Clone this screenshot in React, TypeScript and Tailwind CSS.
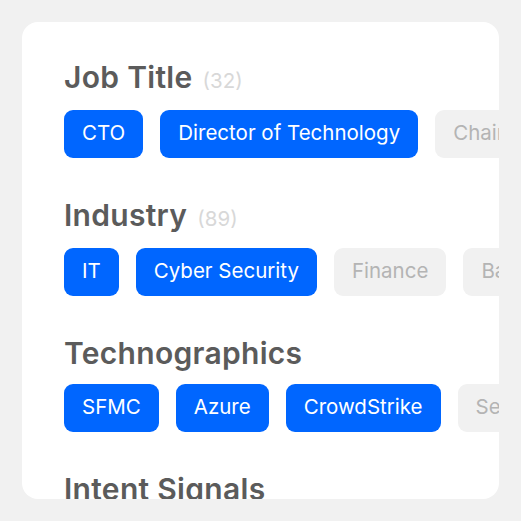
import React from 'react';

type Chip = { label: string; active: boolean };

const sections: { title: string; count?: number; chips: Chip[] }[] = [
  {
    title: 'Job Title',
    count: 32,
    chips: [
      { label: 'CTO', active: true },
      { label: 'Director of Technology', active: true },
      { label: 'Chairman', active: false },
    ],
  },
  {
    title: 'Industry',
    count: 89,
    chips: [
      { label: 'IT', active: true },
      { label: 'Cyber Security', active: true },
      { label: 'Finance', active: false },
      { label: 'Banking', active: false },
    ],
  },
  {
    title: 'Technographics',
    chips: [
      { label: 'SFMC', active: true },
      { label: 'Azure', active: true },
      { label: 'CrowdStrike', active: true },
      { label: 'Segment', active: false },
    ],
  },
  {
    title: 'Intent Signals',
    chips: [
      { label: 'Cloud', active: true },
      { label: 'Security', active: true },
    ],
  },
];

export default function App() {
  return (
    <div className="w-[521px] h-[521px] bg-[#f1f1f1] p-[22px] font-['Inter',sans-serif]">
      <div className="w-full h-full bg-white rounded-[16px] overflow-hidden pl-[42px] pt-[37px]">
        <div className="flex flex-col gap-[39px]">
          {sections.map((s) => (
            <div key={s.title} className="flex flex-col gap-[13px]">
              <div className="flex items-baseline gap-[10px] whitespace-nowrap">
                <h2 className="text-[30px] leading-[36px] font-semibold text-[#5b5b5b] tracking-[0.3px]">
                  {s.title}
                </h2>
                {s.count !== undefined && (
                  <span className="text-[20.5px] text-[#d8d8d8]">({s.count})</span>
                )}
              </div>
              <div className="flex gap-[17px] whitespace-nowrap">
                {s.chips.map((c) => (
                  <span
                    key={c.label}
                    className={
                      c.active
                        ? 'h-[48px] px-[18px] rounded-[9px] flex items-center text-[20.5px] bg-[#0066ff] text-white shrink-0'
                        : 'h-[48px] px-[18px] rounded-[9px] flex items-center text-[20.5px] bg-[#f1f1f1] text-[#b4b4b4] shrink-0'
                    }
                  >
                    {c.label}
                  </span>
                ))}
              </div>
            </div>
          ))}
        </div>
      </div>
    </div>
  );
}
